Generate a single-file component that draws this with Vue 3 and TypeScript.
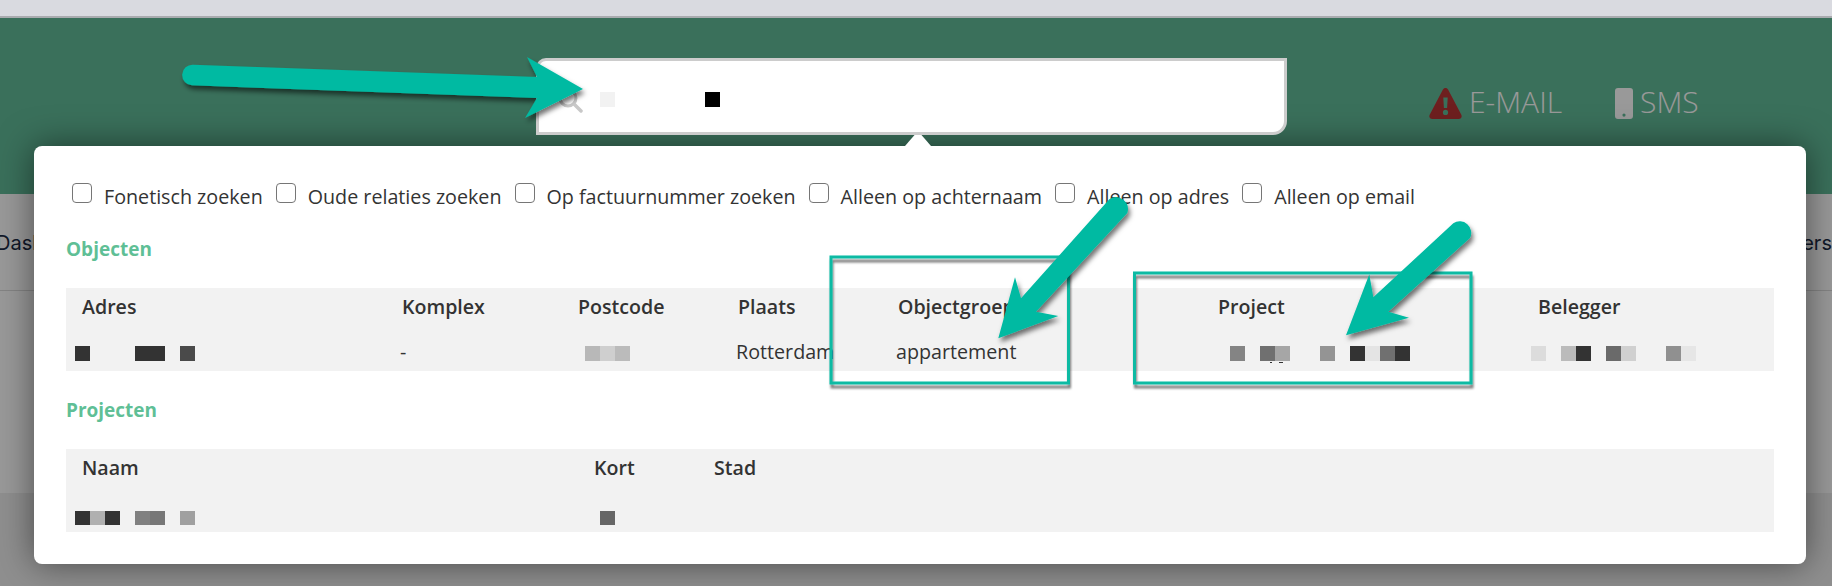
<script setup lang="ts">
interface Cell {
  text?: string
  blocks?: string[]
  shift?: number
}

interface Section {
  title: string
  columns: string[]
  widths: number[]
  cells: Cell[]
  low?: boolean
}

const navItems = ['Dashboard', 'Relaties', 'Objecten', 'Projecten', 'Financieel', 'Gebruikers']

const options = [
  'Fonetisch zoeken',
  'Oude relaties zoeken',
  'Op factuurnummer zoeken',
  'Alleen op achternaam',
  'Alleen op adres',
  'Alleen op email',
]

// '' is a gap in the blurred text
const sections: Section[] = [
  {
    title: 'Objecten',
    columns: ['Adres', 'Komplex', 'Postcode', 'Plaats', 'Objectgroep', 'Project', 'Belegger'],
    widths: [320, 176, 160, 160, 320, 320, 221],
    cells: [
      { blocks: ['#333', '', '', '', '#333', '#333', '', '#4a4a4a'], shift: -7 },
      { text: '-' },
      { blocks: ['#b8b8b8', '#cfcfcf', '#bbb'], shift: 7 },
      { text: 'Rotterdam' },
      { text: 'appartement' },
      {
        blocks: ['#848484', '', '#707070', '#a6a6a6', '', '', '#949494', '', '#333', '#e4e4e4', '#707070', '#333'],
        shift: 12,
      },
      {
        blocks: ['#dcdcdc', '', '#bbb', '#333', '', '#6a6a6a', '#d0d0d0', '', '', '#909090', '#e6e6e6'],
        shift: -7,
      },
    ],
  },
  {
    title: 'Projecten',
    columns: ['Naam', 'Kort', 'Stad'],
    widths: [512, 120, 1044],
    low: true,
    cells: [
      { blocks: ['#333', '#b0b0b0', '#333', '', '#808080', '#777', '', '#a0a0a0'], shift: -7 },
      { blocks: ['#666'], shift: 6 },
      {},
    ],
  },
]

const gridFor = (widths: number[]) => widths.map((w) => `${w}px`).join(' ')
</script>

<template>
  <div class="page">
    <div class="browser-bar"></div>

    <header class="header">
      <div class="search">
        <svg class="search-icon" width="26" height="26" viewBox="0 0 26 26" fill="none">
          <circle cx="11" cy="11" r="8" stroke="#c8c8c8" stroke-width="3" />
          <path d="M17 17l7 7" stroke="#c8c8c8" stroke-width="3.5" stroke-linecap="round" />
        </svg>
        <span class="search-block light"></span>
        <span class="search-block dark"></span>
      </div>
      <div class="alerts">
        <span class="alert">
          <svg width="33" height="31" viewBox="0 0 33 31">
            <path
              fill="#b83535"
              fill-rule="evenodd"
              d="M16.5 0c1.2 0 2 .6 2.7 1.8l13 24.6c1.2 2.3.1 4.6-2.6 4.6H3.4C.7 31-.4 28.7.8 26.4l13-24.6C14.500.6 15.300 0 16.500 0zM14.300 9.500l.6 10.500h3.200l.6-10.500zM16.500 21.800a2.600 2.600 0 1 0 0 5.200 2.600 2.600 0 0 0 0-5.200z"
            />
          </svg>
          <span class="alert-text">E-MAIL</span>
        </span>
        <span class="alert">
          <svg width="18" height="31" viewBox="0 0 18 31">
            <path
              fill="#fff"
              fill-rule="evenodd"
              d="M3 0h12a3 3 0 0 1 3 3v25a3 3 0 0 1-3 3H3a3 3 0 0 1-3-3V3a3 3 0 0 1 3-3zM9 25.500a1.600 1.600 0 1 0 0 3.200 1.600 1.600 0 0 0 0-3.200z"
            />
          </svg>
          <span class="alert-text">SMS</span>
        </span>
      </div>
    </header>

    <nav class="nav">
      <span v-for="item in navItems" :key="item">{{ item }}</span>
    </nav>
    <main class="content"></main>
    <footer class="footer"></footer>

    <div class="overlay"></div>

    <section class="popover">
      <span class="nub"></span>
      <div class="options">
        <label v-for="option in options" :key="option" class="option">
          <input type="checkbox" />
          <span>{{ option }}</span>
        </label>
      </div>

      <div v-for="section in sections" :key="section.title" class="result" :class="{ low: section.low }">
        <h3>{{ section.title }}</h3>
        <div class="table">
          <div class="thead" :style="{ gridTemplateColumns: gridFor(section.widths) }">
            <span v-for="col in section.columns" :key="col">{{ col }}</span>
          </div>
          <div class="tbody" :style="{ gridTemplateColumns: gridFor(section.widths) }">
            <div v-for="(cell, i) in section.cells" :key="i" class="cell">
              <span v-if="cell.text" class="cell-text">{{ cell.text }}</span>
              <div v-else-if="cell.blocks" class="blocks" :style="{ marginLeft: `${cell.shift}px` }">
                <i v-for="(c, j) in cell.blocks" :key="j" :style="{ background: c }"></i>
              </div>
            </div>
          </div>
        </div>
      </div>
    </section>

    <!-- annotations drawn on top of the screenshot -->
    <svg class="marks" width="1832" height="586" viewBox="0 0 1832 586">
      <defs>
        <filter id="drop" x="-20%" y="-20%" width="140%" height="140%">
          <feDropShadow dx="2" dy="4" stdDeviation="2.500" flood-color="#000" flood-opacity="0.55" />
        </filter>
        <filter id="drop-line" x="-5%" y="-10%" width="110%" height="120%">
          <feDropShadow dx="1" dy="4" stdDeviation="1.200" flood-color="#000" flood-opacity="0.5" />
        </filter>
      </defs>
      <g filter="url(#drop-line)">
        <rect x="831" y="257" width="237.500" height="126" fill="none" stroke="#0abaa3" stroke-width="3" />
        <rect x="1134.500" y="273" width="336.500" height="110" fill="none" stroke="#0abaa3" stroke-width="3" />
      </g>
      <g filter="url(#drop)" fill="#02baa2">
        <path d="M537 77L193 64.700A10.300 10.300 0 0 0 192 85.300L537 98L525 118L583 89L527 57Z" />
        <path d="M1021 298.300L1109.300 199.300A12 12 0 0 1 1127.300 213L1036 311.700L1058.300 316L998.300 338.300L1015 277.300Z" />
        <path d="M1373.300 297.300L1453.300 223.300A11.500 11.500 0 0 1 1470 238L1388.300 311.700L1409 317.700L1346 335.300L1369.300 274.300Z" />
      </g>
      <rect x="1270" y="362" width="2" height="1" fill="#333" />
      <rect x="1279" y="362" width="4" height="1" fill="#333" />
    </svg>
  </div>
</template>

<style scoped>
.page {
  position: relative;
  width: 1832px;
  height: 586px;
  overflow: hidden;
  background: #fff;
  font-family: "Open Sans", sans-serif;
  color: #333;
}

.browser-bar {
  height: 16px;
  background: #d9dae0;
  border-bottom: 2px solid #a9abaf;
}

.header {
  display: flex;
  height: 176px;
  background: #62bb98;
}

.search {
  position: relative;
  z-index: 3;
  display: flex;
  align-items: center;
  box-sizing: border-box;
  width: 751px;
  height: 77px;
  margin: 40px 0 0 536px;
  padding: 6px 0 0 18px;
  background: #fff;
  border: 3px solid #ccc;
  border-radius: 10px 0 14px 0;
}

.search-icon {
  flex: none;
}

.search-block {
  width: 15px;
  height: 15px;
}

.search-block.light {
  margin-left: 17px;
  background: #f2f2f2;
}

.search-block.dark {
  margin-left: 90px;
  background: #000;
}

.alerts {
  display: flex;
  align-items: center;
  gap: 53px;
  height: 31px;
  margin: 70px 0 0 142px;
}

.alert {
  display: flex;
  align-items: center;
  gap: 7px;
  font-size: 30px;
  font-weight: 300;
  color: #fff;
}

.alert-text {
  padding-bottom: 4px;
}

.nav {
  display: flex;
  justify-content: space-between;
  align-items: center;
  box-sizing: border-box;
  height: 97px;
  padding-top: 2px;
  border-bottom: 1px solid #ddd;
  font-family: Inter, sans-serif;
  font-size: 20px;
  color: #1c2b45;
}

.nav span:first-child {
  margin-left: -4px;
}

.content {
  height: 202px;
}

.footer {
  height: 93px;
  background: #eee;
}

.overlay {
  position: absolute;
  inset: 18px 0 0;
  z-index: 1;
  background: rgba(0, 0, 0, 0.4);
}

.popover {
  position: absolute;
  top: 146px;
  left: 34px;
  z-index: 2;
  box-sizing: border-box;
  width: 1772px;
  height: 418px;
  padding: 37px 32px 32px;
  background: #fff;
  border-radius: 8px;
  box-shadow: 0 0 35px rgba(0, 0, 0, 0.5);
}

.nub {
  position: absolute;
  top: -15px;
  left: 871px;
  border-left: 13.500px solid transparent;
  border-right: 13.500px solid transparent;
  border-bottom: 15px solid #fff;
}

.options {
  display: flex;
  gap: 13px;
  height: 28px;
  margin-left: 6px;
  margin-bottom: 26px;
}

.option {
  display: flex;
  gap: 12px;
  font-size: 19.700px;
  line-height: 28px;
}

.option input {
  appearance: none;
  box-sizing: border-box;
  width: 20px;
  height: 20px;
  margin: 0;
  background: #fff;
  border: 1.500px solid #767676;
  border-radius: 4px;
}

.result h3 {
  height: 24px;
  margin: 0 0 27px;
  font-size: 19px;
  font-weight: 700;
  line-height: 24px;
  color: #5fbf96;
}

.result + .result {
  margin-top: 27px;
}

.table {
  box-sizing: border-box;
  width: 1708px;
  height: 83px;
  padding-left: 16px;
  background: #f2f2f2;
}

.thead {
  display: grid;
  align-items: center;
  height: 36px;
  font-size: 19.600px;
  font-weight: 600;
}

.tbody {
  display: grid;
  height: 47px;
  padding-top: 18px;
  box-sizing: border-box;
}

.cell {
  font-size: 19.700px;
  line-height: 20px;
  white-space: nowrap;
}

.cell-text {
  display: block;
  margin-left: -2px;
}

.blocks {
  display: flex;
  margin-top: 4px;
}

.blocks i {
  width: 15px;
  height: 15px;
}

.low .blocks {
  margin-top: 8px;
}

.low .blocks i {
  height: 14px;
}

.marks {
  position: absolute;
  top: 0;
  left: 0;
  z-index: 4;
  pointer-events: none;
}
</style>
